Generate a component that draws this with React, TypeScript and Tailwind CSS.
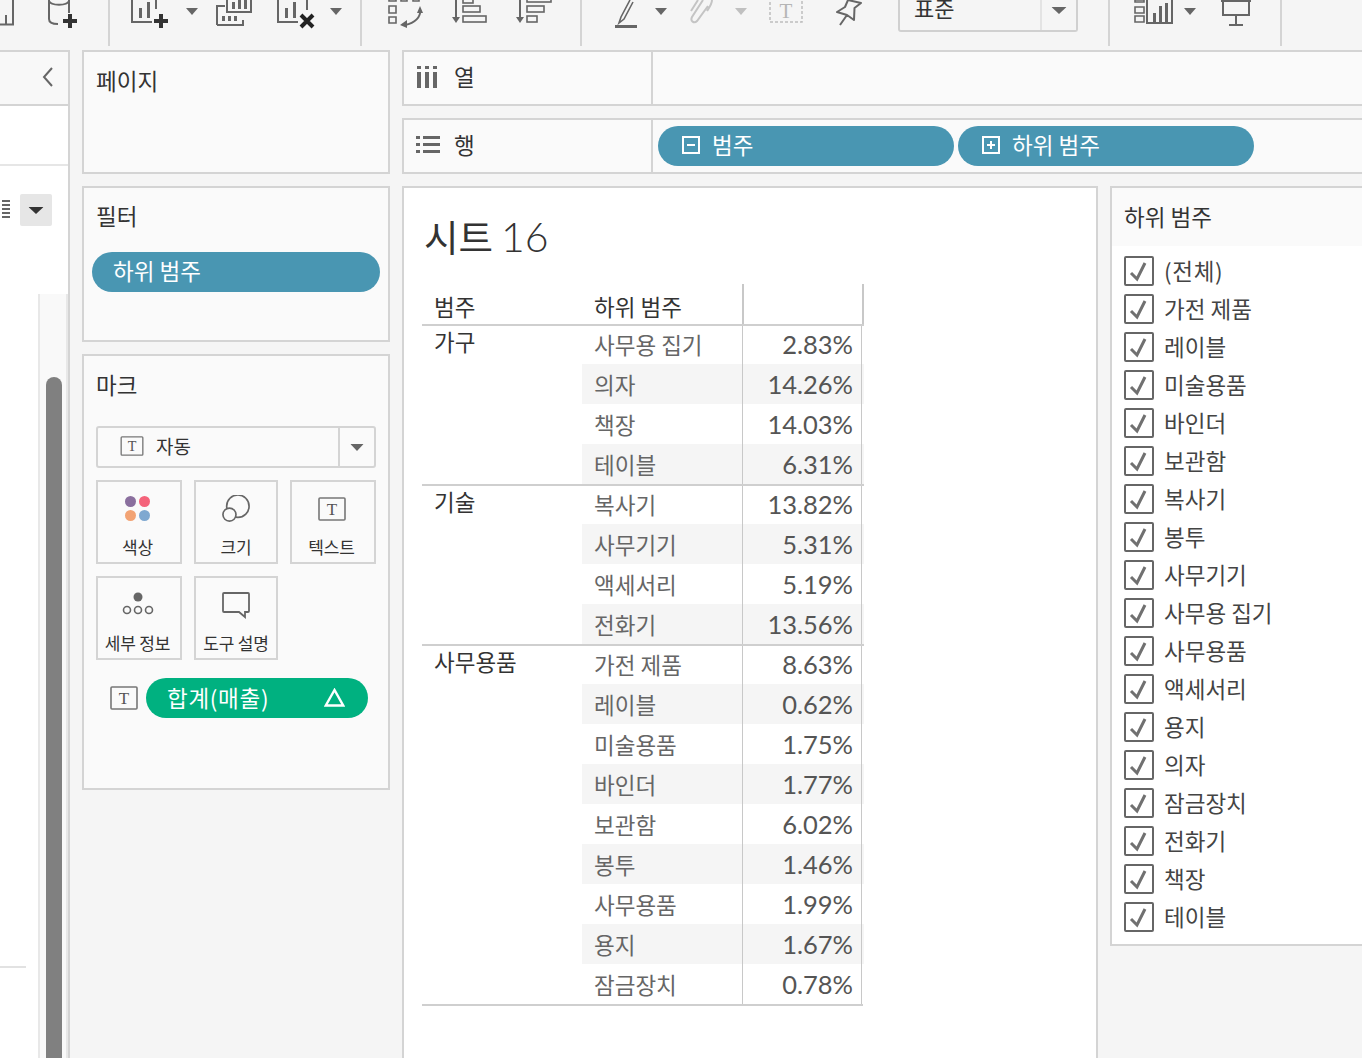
import React from "react";

const gray = "#666666";

const groups = [
  {
    name: "가구",
    rows: [
      ["사무용 집기", "2.83%"],
      ["의자", "14.26%"],
      ["책장", "14.03%"],
      ["테이블", "6.31%"],
    ],
  },
  {
    name: "기술",
    rows: [
      ["복사기", "13.82%"],
      ["사무기기", "5.31%"],
      ["액세서리", "5.19%"],
      ["전화기", "13.56%"],
    ],
  },
  {
    name: "사무용품",
    rows: [
      ["가전 제품", "8.63%"],
      ["레이블", "0.62%"],
      ["미술용품", "1.75%"],
      ["바인더", "1.77%"],
      ["보관함", "6.02%"],
      ["봉투", "1.46%"],
      ["사무용품", "1.99%"],
      ["용지", "1.67%"],
      ["잠금장치", "0.78%"],
    ],
  },
];

const filterItems = [
  "(전체)",
  "가전 제품",
  "레이블",
  "미술용품",
  "바인더",
  "보관함",
  "복사기",
  "봉투",
  "사무기기",
  "사무용 집기",
  "사무용품",
  "액세서리",
  "용지",
  "의자",
  "잠금장치",
  "전화기",
  "책장",
  "테이블",
];

function Caret({ className, color = gray }: { className?: string; color?: string }) {
  return (
    <svg width="12" height="7" viewBox="0 0 12 7" className={className}>
      <path d="M0 0h12L6 7z" fill={color} />
    </svg>
  );
}

function Sep({ className }: { className?: string }) {
  return <div className={`h-[46px] w-[2px] shrink-0 bg-[#d4d4d4] ${className}`} />;
}

function Ico({ w, className, children }: { w: number; className?: string; children: React.ReactNode }) {
  return (
    <svg width={w} height="46" viewBox={`0 0 ${w} 46`} fill="none" className={`shrink-0 ${className}`}>
      {children}
    </svg>
  );
}

function Plus({ x, y }: { x: number; y: number }) {
  return <path d={`M${x + 5} ${y}h4v5h5v4h-5v5h-4v-5h-5v-4h5z`} fill="#333" />;
}

function TBox({ className }: { className?: string }) {
  return (
    <svg width="28" height="24" viewBox="0 0 28 24" className={className}>
      <rect x="1" y="1" width="26" height="22" rx="1" fill="none" stroke="#777" strokeWidth="1.6" />
      <text x="14" y="18" textAnchor="middle" fontFamily="Liberation Serif" fontSize="17" fill="#555">
        T
      </text>
    </svg>
  );
}

function Toolbar() {
  const st = { stroke: gray, strokeWidth: 2 };
  return (
    <div className="flex h-[46px] shrink-0 items-start">
      <Ico w={14}>
        <path d="M13 0v24.500H0M6 15v9" {...st} />
      </Ico>
      <Ico w={30} className="ml-[34px]">
        <path d="M1 0v19c0 3 3 5 9 5M21 0v13M1 1c2 5 18 5 20 0" {...st} />
        <Plus x={15} y={14} />
      </Ico>
      <Sep className="ml-[30px]" />
      <Ico w={38} className="ml-[21px]">
        <path d="M1 0v22h20M25 0v9" {...st} />
        <path d="M8 8h3v10H8zM16 2h3v16h-3z" fill={gray} />
        <Plus x={23} y={14} />
      </Ico>
      <Caret className="ml-[17px] mt-[8px] shrink-0" />
      <Ico w={36} className="ml-[18px]">
        <path d="M11 0v12h24V0M1 25V6h8M1 25h26v-5" {...st} />
        <path d="M16 2h3v7h-3zM22 0h3v9h-3zM28 0h3v9h-3zM6 16h3v5H6zM12 16h3v5h-3zM18 16h3v5h-3z" fill={gray} />
      </Ico>
      <Ico w={38} className="ml-[25px]">
        <path d="M1 0v22h20M30 0v10" {...st} />
        <path d="M8 8h3v10H8zM16 2h3v16h-3z" fill={gray} />
        <path d="M24 15l12 12M36 15L24 27" stroke="#222" strokeWidth="4" />
      </Ico>
      <Caret className="ml-[15px] mt-[8px] shrink-0" />
      <Sep className="ml-[18px]" />
      <Ico w={36} className="ml-[26px]">
        <path d="M1 -2h7v3H1zM13 -2h6v3h-6zM25 -2h6v3h-6zM1 6h7v7H1zM1 17h7v6H1z" {...st} strokeWidth={1.6} />
        <path d="M32 10c1 7-5 13-15 15" {...st} />
        <path d="M29 13l3-7 3 7zM19 20l-7 5 7 3z" fill={gray} />
      </Ico>
      <Ico w={36} className="ml-[28px]">
        <path d="M4 0v20" {...st} />
        <path d="M0 17h8l-4 6z" fill={gray} />
        <rect x="11" y="-2" width="10" height="5" {...st} strokeWidth={1.6} />
        <rect x="11" y="6" width="17" height="6" {...st} strokeWidth={1.6} />
        <rect x="11" y="16" width="23" height="6" {...st} strokeWidth={1.6} />
      </Ico>
      <Ico w={36} className="ml-[28px]">
        <path d="M4 0v20" {...st} />
        <path d="M0 17h8l-4 6z" fill={gray} />
        <rect x="11" y="-3" width="24" height="5" {...st} strokeWidth={1.6} />
        <rect x="11" y="6" width="17" height="6" {...st} strokeWidth={1.6} />
        <rect x="11" y="16" width="10" height="6" {...st} strokeWidth={1.6} />
      </Ico>
      <Sep className="ml-[28px]" />
      <Ico w={22} className="ml-[33px]">
        <path d="M15 0L6 17l-2 6 5-4L18 2" {...st} strokeWidth={1.6} />
        <path d="M0 26.500h22" stroke={gray} strokeWidth="3" />
      </Ico>
      <Caret className="ml-[18px] mt-[8px] shrink-0" />
      <Ico w={25} className="ml-[23px]">
        <path d="M13 0L2 17c-2 4 2 7 5 4L18 6M8 0L1 11M22 0c0 4-3 8-5 11" stroke="#c4c4c4" strokeWidth="2" />
      </Ico>
      <Caret className="ml-[20px] mt-[8px] shrink-0" color="#c0c0c0" />
      <Ico w={34} className="ml-[22px]">
        <rect x="1" y="-2" width="32" height="24" stroke="#bdbdbd" strokeWidth="1.5" strokeDasharray="3 2" />
        <text x="17" y="18" textAnchor="middle" fontFamily="Liberation Serif" fontSize="21" fill="#b5b5b5">
          T
        </text>
      </Ico>
      <Ico w={26} className="ml-[33px]">
        <path d="M12 0L25 3 18.500 8 18 20 11 15 1 12 9 7zM11 15L4 25" {...st} strokeLinejoin="round" />
      </Ico>
      <div className="ml-[36px] flex h-[32px] w-[180px] shrink-0 rounded-b-[3px] border-x-2 border-b-2 border-[#d0d0d0]">
        <div className="flex flex-1 items-end pb-[8px] pl-[14px] text-[22px] leading-[30px] text-[#333]">표준</div>
        <div className="flex w-[36px] justify-center border-l-2 border-[#e3e3e3] pt-[7px]">
          <Caret className="scale-x-125" />
        </div>
      </div>
      <Sep className="ml-[30px]" />
      <Ico w={40} className="ml-[24px]">
        <path d="M1 0h9v2H1zM1 7h9v6H1zM1 16h9v6H1z" {...st} strokeWidth={1.6} />
        <path d="M13 0v23h25V0" {...st} />
        <path d="M19 13h3v9h-3zM25 6h3v16h-3zM31 3h3v19h-3z" fill={gray} />
      </Ico>
      <Caret className="ml-[10px] mt-[8px] shrink-0" />
      <Ico w={32} className="ml-[24px]">
        <path d="M1 1h30M3 1v14h26V1M16 15v9M9 25h14" {...st} />
      </Ico>
      <Sep className="ml-[28px]" />
    </div>
  );
}

function Sidebar() {
  return (
    <div className="flex w-[70px] shrink-0 flex-col border-r-2 border-[#d4d4d4] bg-white">
      <div className="flex h-[56px] shrink-0 items-center justify-end border-y-2 border-[#d4d4d4] bg-[#f8f8f8] pb-[2px] pr-[14px]">
        <svg width="12" height="20" viewBox="0 0 12 20" fill="none">
          <path d="M10 1L2 10l8 9" stroke={gray} strokeWidth="2" />
        </svg>
      </div>
      <div className="h-[60px] shrink-0 border-b-2 border-[#e6e6e6]" />
      <div className="flex h-[128px] shrink-0 items-start pt-[28px]">
        <div className="flex w-[20px] flex-col gap-[2px] pl-[2px] pt-[6px]">
          <div className="h-[2px] w-[8px] bg-[#666]" />
          <div className="h-[2px] w-[8px] bg-[#666]" />
          <div className="h-[2px] w-[8px] bg-[#666]" />
          <div className="h-[2px] w-[8px] bg-[#666]" />
          <div className="h-[2px] w-[8px] bg-[#666]" />
        </div>
        <div className="flex h-[32px] w-[32px] items-center justify-center rounded-[2px] bg-[#e6e6e6]">
          <Caret color="#333" className="scale-x-125" />
        </div>
      </div>
      <div className="flex min-h-0 flex-1">
        <div className="flex w-[38px] flex-col justify-end pb-[90px]">
          <div className="h-[2px] w-[26px] bg-[#e2e2e2]" />
        </div>
        <div className="w-[30px] border-x-2 border-[#e8e8e8] bg-[#f9f9f9] pl-[6px] pt-[83px]">
          <div className="h-[800px] w-[16px] rounded-t-full bg-[#808080]" />
        </div>
      </div>
    </div>
  );
}

function Card({ label, shift, children }: { label: string; shift?: boolean; children: React.ReactNode }) {
  return (
    <div className={`flex h-[84px] flex-col items-center border-2 border-[#d4d4d4] ${shift ? "pr-[3px]" : ""}`}>
      <div className="flex h-[53px] shrink-0 items-center justify-center">{children}</div>
      <div className="whitespace-nowrap text-[17px] leading-[24px] tracking-[-0.2px] text-[#333]">{label}</div>
    </div>
  );
}

function PillIcon({ minus }: { minus?: boolean }) {
  return (
    <svg width="18" height="18" viewBox="0 0 18 18" fill="none" className="shrink-0">
      <rect x="1" y="1" width="16" height="16" stroke="white" strokeWidth="2" />
      <path d={minus ? "M5 9h8" : "M5 9h8M9 5v8"} stroke="white" strokeWidth="2" />
    </svg>
  );
}

function LeftColumn() {
  return (
    <div className="ml-[12px] flex w-[308px] shrink-0 flex-col gap-[12px]">
      <div className="h-[124px] border-2 border-[#d4d4d4] bg-[#fafafa] pl-[12px] pt-[12px] text-[22.5px] leading-[32px] text-[#333]">
        페이지
      </div>
      <div className="h-[156px] border-2 border-[#d4d4d4] bg-[#fafafa] pt-[11px]">
        <div className="pl-[12px] text-[22.5px] leading-[32px] text-[#333]">필터</div>
        <div className="ml-[8px] mt-[21px] flex h-[40px] w-[288px] items-center rounded-full bg-[#4996b2] pb-[2px] pl-[21px] text-[22.5px] text-white">
          하위 범주
        </div>
      </div>
      <div className="h-[436px] border-2 border-[#d4d4d4] bg-[#fafafa] px-[12px] pt-[12px]">
        <div className="text-[22.5px] leading-[32px] text-[#333]">마크</div>
        <div className="mt-[26px] flex h-[42px] w-[280px] rounded-[3px] border-2 border-[#d4d4d4]">
          <div className="flex flex-1 items-center pb-[2px] pl-[22px] text-[19px] text-[#333]">
            <TBox className="h-[20px] w-[24px]" />
            <span className="ml-[12px]">자동</span>
          </div>
          <div className="flex w-[36px] items-center justify-center border-l-2 border-[#d4d4d4]">
            <Caret className="scale-x-110" />
          </div>
        </div>
        <div className="mt-[12px] grid w-[280px] grid-cols-[86px_84px_86px] gap-x-[12px] gap-y-[12px]">
          <Card label="색상" shift>
            <div className="grid grid-cols-2 gap-[3px]">
              <div className="h-[11px] w-[11px] rounded-full bg-[#8a6f9e]" />
              <div className="h-[11px] w-[11px] rounded-full bg-[#f4637a]" />
              <div className="h-[11px] w-[11px] rounded-full bg-[#f2a374]" />
              <div className="h-[11px] w-[11px] rounded-full bg-[#7fa8d0]" />
            </div>
          </Card>
          <Card label="크기">
            <svg width="28" height="28" viewBox="0 0 30 30" fill="none">
              <circle cx="17" cy="12" r="12" stroke={gray} strokeWidth="1.8" />
              <circle cx="8" cy="21" r="7" fill="#fafafa" stroke={gray} strokeWidth="1.8" />
            </svg>
          </Card>
          <Card label="텍스트" shift>
            <TBox />
          </Card>
          <Card label="세부 정보" shift>
            <svg width="32" height="26" viewBox="0 0 32 26" fill="none">
              <circle cx="16" cy="5" r="4.500" fill={gray} />
              <circle cx="5" cy="18" r="3.500" stroke={gray} strokeWidth="1.6" />
              <circle cx="16" cy="18" r="3.500" stroke={gray} strokeWidth="1.6" />
              <circle cx="27" cy="18" r="3.500" stroke={gray} strokeWidth="1.6" />
            </svg>
          </Card>
          <Card label="도구 설명">
            <svg width="30" height="28" viewBox="0 0 30 28" fill="none">
              <path d="M3 2h24a1 1 0 0 1 1 1v17a1 1 0 0 1-1 1h-3v5l-6-5H3a1 1 0 0 1-1-1V3a1 1 0 0 1 1-1z" stroke={gray} strokeWidth="1.8" />
            </svg>
          </Card>
        </div>
        <div className="ml-[14px] mt-[18px] flex items-center">
          <TBox />
          <div className="ml-[8px] flex h-[40px] w-[222px] items-center justify-between rounded-full bg-[#00b180] pb-[1px] pl-[21px] pr-[23px] text-[22.5px] text-white">
            <span className="tracking-[0.7px]">합계(매출)</span>
            <svg width="21" height="19" viewBox="0 0 21 19" fill="none">
              <path d="M10.500 2L1.800 17.500h17.400z" stroke="white" strokeWidth="2.400" />
            </svg>
          </div>
        </div>
      </div>
    </div>
  );
}

function Shelf({ label, icon, children }: { label: string; icon: React.ReactNode; children?: React.ReactNode }) {
  return (
    <div className="flex h-[56px] w-[1000px] shrink-0 border-2 border-[#d4d4d4] bg-[#fafafa]">
      <div className="flex w-[249px] shrink-0 items-center border-r-2 border-[#d4d4d4] pb-[2px] text-[22.5px] text-[#333]">
        <div className="ml-[12px] w-[38px]">{icon}</div>
        {label}
      </div>
      <div className="flex items-center gap-[4px] pl-[5px]">{children}</div>
    </div>
  );
}

function Pill({ label, minus }: { label: string; minus?: boolean }) {
  return (
    <div className="flex h-[40px] w-[296px] items-center rounded-full bg-[#4996b2] pb-[2px] pl-[24px] text-[22.5px] text-white">
      <PillIcon minus={minus} />
      <span className="ml-[12px]">{label}</span>
    </div>
  );
}

function DataTable() {
  return (
    <div className="ml-[18px] w-[442px] text-[22.5px]">
      <div className="flex h-[40px] items-end text-[#333]">
        <div className="w-[160px] pb-[1px] pl-[12px] leading-[34px]">범주</div>
        <div className="h-full w-[162px] border-r-2 border-[#c8c8c8] pl-[12px] pt-[5px] leading-[34px]">하위 범주</div>
        <div className="h-full w-[120px] border-r-2 border-[#c8c8c8]" />
      </div>
      {groups.map((g) => (
        <div key={g.name} className="flex border-t-2 border-[#cfcfcf]">
          <div className="w-[160px] pl-[12px] leading-[30px] text-[#333]">{g.name}</div>
          <div className="flex-1">
            {g.rows.map((r, i) => (
              <div key={r[0]} className={`flex ${i === 0 ? "h-[38px]" : "h-[40px]"} ${i % 2 === 1 ? "bg-[#f5f5f5]" : ""}`}>
                <div className={`flex w-[161px] items-center border-r border-[#c8c8c8] pl-[12px] text-[#666] ${i > 0 ? "pt-[2px]" : ""}`}>
                  {r[0]}
                </div>
                <div className={`flex w-[119px] items-center justify-end border-r border-[#c8c8c8] pr-[8px] font-[Lato,sans-serif] text-[25.5px] text-[#555] ${i === 0 ? "pb-[2px]" : ""}`}>
                  {r[1]}
                </div>
              </div>
            ))}
          </div>
        </div>
      ))}
      <div className="h-[2px] w-[441px] bg-[#cfcfcf]" />
    </div>
  );
}

function FilterCard() {
  return (
    <div className="ml-[12px] h-[760px] w-[300px] shrink-0 border-2 border-[#d4d4d4] bg-white">
      <div className="flex h-[58px] items-center bg-[#fafafa] pl-[12px] text-[22.5px] text-[#333]">하위 범주</div>
      <div className="pl-[12px] pt-[10px]">
        {filterItems.map((item) => (
          <div key={item} className="flex h-[38px] items-start text-[22.5px] leading-[28px] text-[#444]">
            <div className="flex h-[30px] w-[30px] shrink-0 items-center justify-center rounded-[2px] border-2 border-[#666]">
              <svg width="26" height="26" viewBox="0 0 26 26" fill="none">
                <path d="M5 15l6 6 8-16" stroke="#707070" strokeWidth="3" />
              </svg>
            </div>
            <span className={`ml-[10px] whitespace-nowrap ${item === "(전체)" ? "tracking-[0.7px]" : ""}`}>{item}</span>
          </div>
        ))}
      </div>
    </div>
  );
}

export default function App() {
  return (
    <div className="flex h-[1058px] w-[1362px] flex-col overflow-hidden bg-[#f5f5f5] font-['Noto_Sans_CJK_KR',sans-serif]">
      <Toolbar />
      <div className="mt-[4px] flex min-h-0 flex-1">
        <Sidebar />
        <LeftColumn />
        <div className="ml-[12px] flex min-w-0 flex-1 flex-col gap-[12px]">
          <Shelf
            label="열"
            icon={
              <svg width="22" height="24" viewBox="0 0 22 24" fill={gray}>
                <path d="M1 1h4v3H1zM9 1h4v3H9zM17 1h4v3h-4zM1 7h4v16H1zM9 7h4v16H9zM17 7h4v16h-4z" />
              </svg>
            }
          />
          <Shelf
            label="행"
            icon={
              <svg width="24" height="20" viewBox="0 0 24 20" fill={gray}>
                <path d="M0 1h4v3H0zM7 1h17v3H7zM0 8h4v3H0zM7 8h17v3H7zM0 15h4v3H0zM7 15h17v3H7z" />
              </svg>
            }
          >
            <Pill label="범주" minus />
            <Pill label="하위 범주" />
          </Shelf>
          <div className="flex min-h-0 flex-1">
            <div className="h-[900px] w-[696px] shrink-0 border-2 border-[#d4d4d4] bg-white">
              <div className="flex h-[96px] items-baseline pl-[20px] pt-[20px] text-[37.5px] leading-[56px] text-[#333]">
                시트
                <span className="ml-[8px] font-[Lato,sans-serif] text-[41px] font-light">16</span>
              </div>
              <DataTable />
            </div>
            <FilterCard />
          </div>
        </div>
      </div>
    </div>
  );
}
